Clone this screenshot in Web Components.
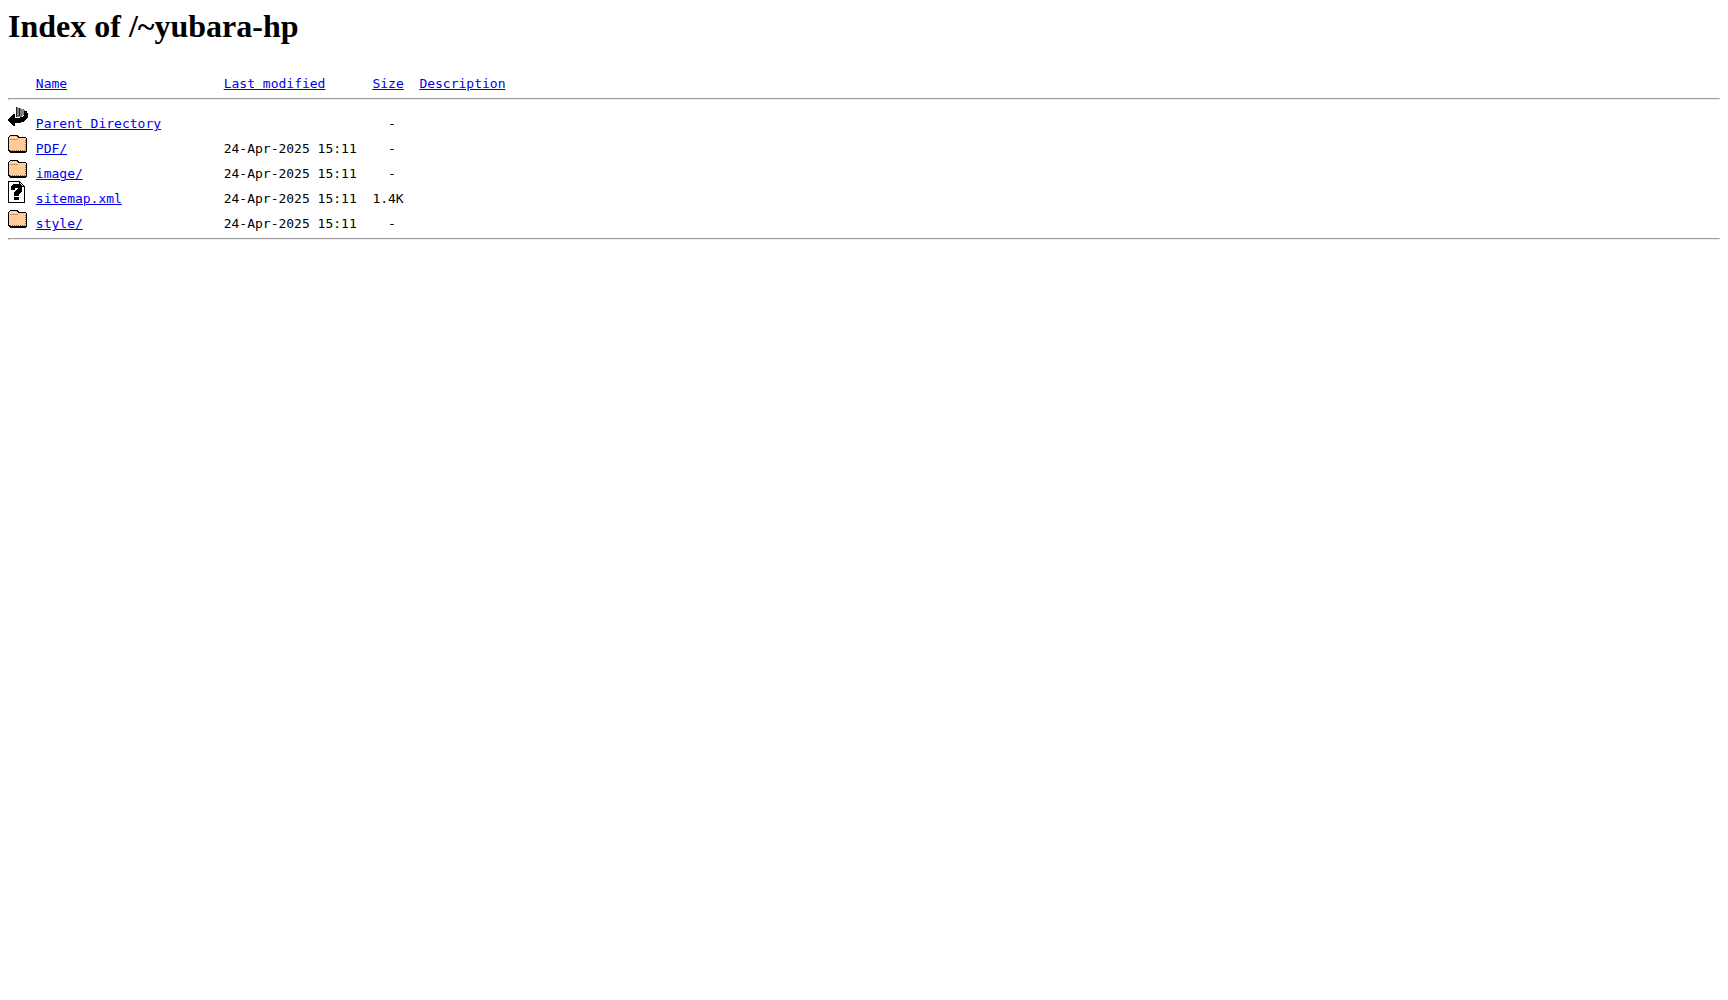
<!DOCTYPE html>
<html>
<head>
<meta charset="utf-8">
<title>Index of /~yubara-hp</title>
<style>
  body { background: #fff; color: #000; }
</style>
</head>
<body>
<index-page></index-page>

<script>
// icons are the old 20x22 server gifs, drawn as paths
const ICONS = {
  blank: '',
  back: `
    <path d="M8 1h2v1h2l1 1h2l2 2 1 1v2l-2 1h-1l-2 2H8z" fill="#808080"/>
    <path d="M8 1h1v10H8zM11 2h1v8h-1z" fill="#222"/>
    <path d="M16 5h2l1 1 1 2v3l-2 3-3 2-4 1H7v3H6l-6-5v-2l6-5h1v4h3l4-1 2-2V7z" fill="#000"/>`,
  folder: `
    <path d="M2 4h7l2 2h6l2 2v12l-2 2H2l-2-2V6z" fill="#000"/>
    <path d="M2 5h6l2 2h7l1 1v11l-1 1H2l-1-1V6z" fill="#fc9"/>
    <path d="M2 6h6" stroke="#ffe6cc" fill="none"/>
    <path d="M2 8.5h8" stroke="#c96" fill="none"/>
    <path d="M17.5 9v10M2 19.5h15" stroke="#963" stroke-dasharray="1 1" fill="none"/>`,
  unknown: `
    <path d="M.5.5h11l5 5v16H.5z" fill="#fff" stroke="#000"/>
    <path d="M11.5.5v5h5z" fill="#ddd" stroke="#000"/>
    <path d="M16 6h1v16H1v-1h15z" fill="#000"/>
    <path d="M3 8V5l2-2h7l2 2v5l-3 3v2H6v-4l4-3V7H7v2H3zM6 16h5v3H6z" fill="#000"/>`
};

class DirIcon extends HTMLElement {
  constructor() {
    super();
    this.attachShadow({ mode: 'open' });
  }

  connectedCallback() {
    const name = this.getAttribute('name') || 'blank';
    this.shadowRoot.innerHTML = `
      <style>
        :host { display: inline-block; width: 20px; height: 22px; white-space: normal; }
        svg { display: block; }
      </style>
      <svg width="20" height="22" viewBox="0 0 20 22" shape-rendering="crispEdges">${ICONS[name]}</svg>
    `;
  }
}

class IndexPage extends HTMLElement {
  constructor() {
    super();
    this.attachShadow({ mode: 'open' });
  }

  connectedCallback() {
    this.shadowRoot.innerHTML = `
      <style>
        :host { display: block; }
        h1 { font-family: "Liberation Serif", serif; font-size: 32px; font-weight: bold; margin: 0 0 21.44px; }
        pre { font-family: "DejaVu Sans Mono", monospace; font-size: 13px; margin: 13px 0; }
        a { color: #00e; text-decoration: underline; }
      </style>
      <h1>Index of /~yubara-hp</h1>
<pre><dir-icon name="blank"></dir-icon> <a href="#">Name</a>                    <a href="#">Last modified</a>      <a href="#">Size</a>  <a href="#">Description</a><hr><dir-icon name="back"></dir-icon> <a href="#">Parent Directory</a>                             -   
<dir-icon name="folder"></dir-icon> <a href="#">PDF/</a>                    24-Apr-2025 15:11    -   
<dir-icon name="folder"></dir-icon> <a href="#">image/</a>                  24-Apr-2025 15:11    -   
<dir-icon name="unknown"></dir-icon> <a href="#">sitemap.xml</a>             24-Apr-2025 15:11  1.4K  
<dir-icon name="folder"></dir-icon> <a href="#">style/</a>                  24-Apr-2025 15:11    -   
<hr></pre>
    `;
  }
}

customElements.define('dir-icon', DirIcon);
customElements.define('index-page', IndexPage);
</script>
</body>
</html>
